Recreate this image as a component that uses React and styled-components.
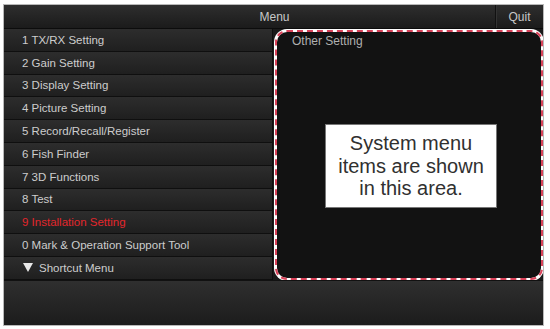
import React from 'react';
import styled, { createGlobalStyle } from 'styled-components';

const Global = createGlobalStyle`
  html, body {
    margin: 0;
    padding: 0;
    background: #ffffff;
  }
  body {
    font-family: "Liberation Sans", Arial, sans-serif;
  }
`;

const Screen = styled.div`
  margin: 4px 0 0 3px;
  width: 539px;
  height: 320px;
  border: 1px solid #b8b8b8;
  background: #1a1a1a;
  display: flex;
  flex-direction: column;
  overflow: hidden;
`;

const Header = styled.div`
  height: 23px;
  display: flex;
  align-items: stretch;
  background: linear-gradient(#2e2e2e, #1b1b1b);
  border-bottom: 1px solid #0c0c0c;
  color: #c8c8c8;
  font-size: 12px;
`;

const Title = styled.div`
  flex: 1;
  display: flex;
  align-items: center;
  justify-content: center;
  padding-left: 50px;
`;

const Quit = styled.div`
  width: 47px;
  display: flex;
  align-items: center;
  justify-content: center;
  border-left: 1px solid #111;
  box-shadow: inset 1px 0 0 #333;
`;

const Main = styled.div`
  display: flex;
  height: 251px;
`;

const MenuList = styled.div`
  width: 268px;
  display: flex;
  flex-direction: column;
  border-right: 1px solid #0e0e0e;
`;

const Row = styled.div`
  height: 22.8px;
  box-sizing: border-box;
  display: flex;
  align-items: center;
  gap: 6px;
  padding-left: 18px;
  background: linear-gradient(#2d2d2d, #1f1f1f);
  border-bottom: 1px solid #0f0f0f;
  color: ${p => (p.$active ? '#e3262c' : '#cdcdcd')};
  font-size: 11.5px;
  white-space: nowrap;
`;

const Arrow = styled.span`
  width: 0;
  height: 0;
  border-left: 5px solid transparent;
  border-right: 5px solid transparent;
  border-top: 9px solid #e8e8e8;
  margin-left: 1px;
`;

const Panel = styled.div`
  flex: 1;
  margin: 1px 0 0 2px;
  border: 2px dashed #d9435a;
  border-radius: 12px;
  box-shadow: 0 0 0 1px #ffffff;
  background: linear-gradient(#121212, #121212) padding-box, #ffffff border-box;
  display: flex;
  flex-direction: column;
  align-items: flex-start;
`;

const PanelTitle = styled.div`
  color: #b0b0b0;
  font-size: 12px;
  padding: 2px 0 0 15px;
`;

const Note = styled.div`
  margin: 76px 0 0 48px;
  width: 172px;
  height: 84px;
  background: #ffffff;
  border: 1px solid #777;
  box-sizing: border-box;
  display: flex;
  align-items: center;
  justify-content: center;
  text-align: center;
  color: #303030;
  font-size: 20px;
  line-height: 22.5px;
`;

const Footer = styled.div`
  flex: 1;
  background: linear-gradient(#2f2f2f, #1c1c1c);
  border-top: 1px solid #111;
`;

const items = [
  '1 TX/RX Setting',
  '2 Gain Setting',
  '3 Display Setting',
  '4 Picture Setting',
  '5 Record/Recall/Register',
  '6 Fish Finder',
  '7 3D Functions',
  '8 Test',
  '9 Installation Setting',
  '0 Mark & Operation Support Tool',
];

export default function App() {
  return (
    <>
      <Global />
      <Screen>
        <Header>
          <Title>Menu</Title>
          <Quit>Quit</Quit>
        </Header>
        <Main>
          <MenuList>
            {items.map(label => (
              <Row key={label} $active={label.startsWith('9')}>
                {label}
              </Row>
            ))}
            <Row>
              <Arrow />
              Shortcut Menu
            </Row>
          </MenuList>
          <Panel>
            <PanelTitle>Other Setting</PanelTitle>
            <Note>
              System menu
              <br />
              items are shown
              <br />
              in this area.
            </Note>
          </Panel>
        </Main>
        <Footer />
      </Screen>
    </>
  );
}
